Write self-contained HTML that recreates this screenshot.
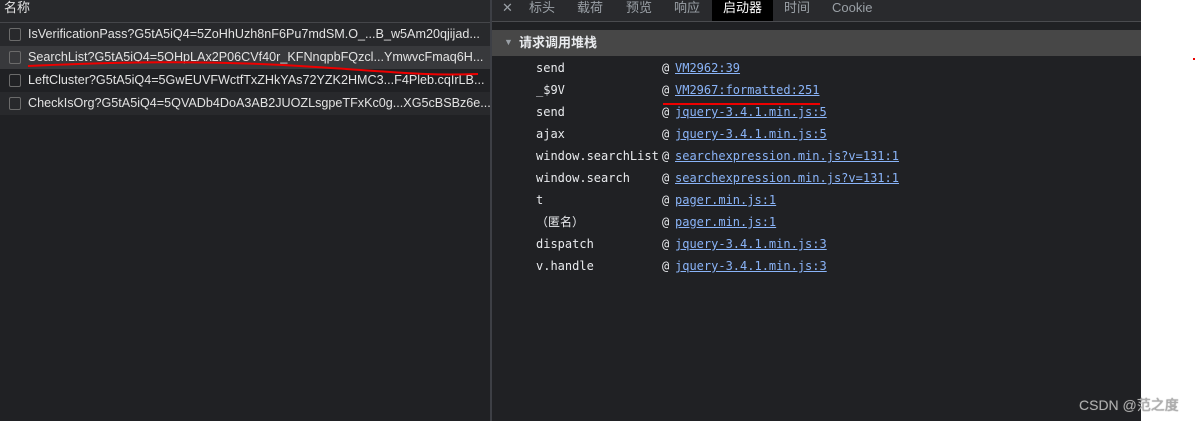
<html><head><style>
body{margin:0;width:1195px;height:421px;background:#fff;position:relative;overflow:hidden;font-family:"Liberation Sans","Noto Sans CJK SC",sans-serif}
.p{position:absolute}
.mono{font-family:"DejaVu Sans Mono","Liberation Mono",monospace;font-size:12px}
.row{position:absolute;left:0;width:490px;height:23px;color:#e3e3e3;font-size:12.6px;line-height:23px;white-space:nowrap;overflow:hidden}
.cb{position:absolute;left:9px;top:5px;width:10px;height:11px;border:1px solid #6b6b6b;border-radius:2px}
.row span{position:absolute;left:28px}
.tab{position:absolute;top:0;height:21px;line-height:16px;font-size:13px;color:#9aa0a6}
.st{position:absolute;height:22px;line-height:22px;color:#e8eaed;white-space:nowrap}
.st a{position:absolute;left:139px;color:#8ab4f8;text-decoration:underline;white-space:nowrap}
.st b{position:absolute;left:126px;font-weight:normal;color:#e8eaed}
</style></head><body>
<div class="p" style="left:0;top:0;width:1141px;height:421px;background:#202124"></div>
<div class="p" style="left:0;top:0;width:490px;height:22px;background:#28292c;border-bottom:1px solid #45464a"></div>
<div class="p" style="left:4px;top:0;color:#e3e3e3;font-size:13px;line-height:16px">名称</div>
<div class="row" style="top:23px;background:#28292c"><div class="cb"></div><span>IsVerificationPass?G5tA5iQ4=5ZoHhUzh8nF6Pu7mdSM.O_...B_w5Am20qjijad...</span></div>
<div class="row" style="top:46px;background:#38393c"><div class="cb"></div><span>SearchList?G5tA5iQ4=5OHpLAx2P06CVf40r_KFNnqpbFQzcl...YmwvcFmaq6H...</span></div>
<div class="row" style="top:69px;background:#202124"><div class="cb"></div><span>LeftCluster?G5tA5iQ4=5GwEUVFWctfTxZHkYAs72YZK2HMC3...F4Pleb.cqIrLB...</span></div>
<div class="row" style="top:92px;background:#28292c"><div class="cb"></div><span>CheckIsOrg?G5tA5iQ4=5QVADb4DoA3AB2JUOZLsgpeTFxKc0g...XG5cBSBz6e...</span></div>
<div class="p" style="left:490px;top:0;width:2px;height:421px;background:#3d3f45"></div>
<div class="p" style="left:492px;top:0;width:649px;height:21px;background:#292a2d;border-bottom:1px solid #4a4b4f"></div>
<div class="tab" style="left:502px">✕</div>
<div class="tab" style="left:529px">标头</div>
<div class="tab" style="left:577px">载荷</div>
<div class="tab" style="left:626px">预览</div>
<div class="tab" style="left:674px">响应</div>
<div class="tab" style="left:712px;width:61px;background:#000;color:#fff;text-align:center">启动器</div>
<div class="tab" style="left:784px">时间</div>
<div class="tab" style="left:832px">Cookie</div>
<div class="p" style="left:492px;top:30px;width:649px;height:26px;background:#474747"></div>
<div class="p" style="left:504px;top:37px;color:#9aa0a6;font-size:9px">▼</div>
<div class="p" style="left:519px;top:35px;color:#e8eaed;font-size:13px;font-weight:bold;line-height:16px">请求调用堆栈</div>
<div class="mono">
<div class="st" style="left:536px;top:57px">send<b>@</b><a>VM2962:39</a></div>
<div class="st" style="left:536px;top:79px">_$9V<b>@</b><a>VM2967:formatted:251</a></div>
<div class="st" style="left:536px;top:101px">send<b>@</b><a>jquery-3.4.1.min.js:5</a></div>
<div class="st" style="left:536px;top:123px">ajax<b>@</b><a>jquery-3.4.1.min.js:5</a></div>
<div class="st" style="left:536px;top:145px">window.searchList<b>@</b><a>searchexpression.min.js?v=131:1</a></div>
<div class="st" style="left:536px;top:167px">window.search<b>@</b><a>searchexpression.min.js?v=131:1</a></div>
<div class="st" style="left:536px;top:189px">t<b>@</b><a>pager.min.js:1</a></div>
<div class="st" style="left:536px;top:211px">（匿名）<b>@</b><a>pager.min.js:1</a></div>
<div class="st" style="left:536px;top:233px">dispatch<b>@</b><a>jquery-3.4.1.min.js:3</a></div>
<div class="st" style="left:536px;top:255px">v.handle<b>@</b><a>jquery-3.4.1.min.js:3</a></div>
</div>
<svg class="p" style="left:0;top:0" width="1195" height="421">
<path d="M28 66 C120 62 200 60 300 66 S420 76 478 74" stroke="#e00" stroke-width="2" fill="none"/>
<path d="M663 104 L820 104" stroke="#e00" stroke-width="2"/>
<rect x="1193" y="58" width="2" height="2" fill="#e00"/>
</svg>
<div class="p" style="left:1079px;top:395px;color:#b0b0b0;font-size:14px;text-shadow:0 0 1px #555">CSDN @范之度</div>
</body></html>
